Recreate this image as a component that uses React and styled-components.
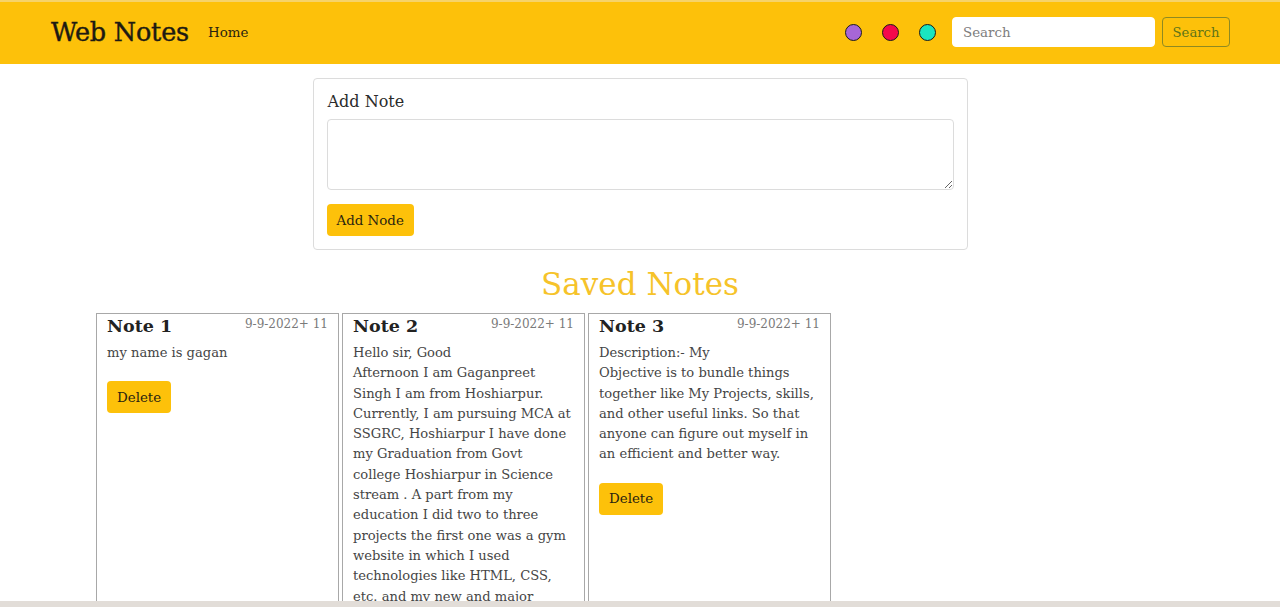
import React from "react";
import styled, { createGlobalStyle } from "styled-components";

const GlobalStyle = createGlobalStyle`
    *{
        box-sizing : border-box;
    }
    body{
        margin : 0;
        background : #fff;
        font-family : "DejaVu Serif", "Liberation Serif", serif;
        color : #212529;
    }
`

const Nav = styled.nav`
    height : 64px;
    background : #fdc10a;
    border-top : 2px solid #f6d36a;
    display : flex;
    align-items : center;
    padding : 0 50px 2px 51px;
`
const Brand = styled.a`
    font-size : 25.5px;
    color : #1d1a12;
    margin-right : 19px;
    letter-spacing : -0.2px;
    -webkit-text-stroke : 0.4px #1d1a12;
`
const NavLink = styled.a`
    font-size : 13.4px;
    color : #2a2410;
`
const Spacer = styled.div`
    flex : 1;
`
const Dot = styled.span`
    width : 17px;
    height : 17px;
    border-radius : 50%;
    border : 1.5px solid #1a1a1a;
    background : ${props=>props.color};
    margin-right : 20px;
    display : inline-block;
`
const SearchForm = styled.form`
    display : flex;
    align-items : center;
    margin-left : -4px;
`
const SearchInput = styled.input`
    width : 203px;
    height : 30px;
    border : 1px solid #fff;
    border-radius : 4px;
    padding : 0 10px;
    font-family : inherit;
    font-size : 13.4px;
    outline : none;
    &::placeholder{
        color : #7d7d7d;
    }
`
const SearchButton = styled.button`
    margin-left : 7px;
    height : 30px;
    width : 68px;
    background : transparent;
    border : 1px solid #8e8a22;
    border-radius : 4px;
    font-family : inherit;
    font-size : 13.2px;
    color : #5f7418;
`

const Main = styled.main`
    padding-top : 14px;
`
const AddCard = styled.div`
    width : 655px;
    margin : 0 auto;
    border : 1px solid #dcdcdc;
    border-radius : 4px;
    padding : 13px 13px 13px;
`
const AddTitle = styled.h5`
    margin : 0 0 7px 1px;
    font-size : 16px;
    font-weight : normal;
    line-height : 20px;
    color : #2b2b2b;
`
const TextArea = styled.textarea`
    display : block;
    width : 100%;
    height : 71px;
    border : 1px solid #dcdcdc;
    border-radius : 4px;
    font-family : inherit;
    margin-bottom : 14px;
`
const YellowButton = styled.button`
    height : 32px;
    padding : 0 10px;
    background : #fdc10a;
    border : none;
    border-radius : 4px;
    font-family : inherit;
    font-size : 13.4px;
    color : #2a2410;
`
const Heading = styled.h1`
    text-align : center;
    font-size : 31px;
    font-weight : normal;
    color : #f6c32a;
    margin : 13px 0 8px;
    line-height : 42px;
`
const NotesRow = styled.div`
    display : flex;
    gap : 3px;
    margin-left : 96px;
`
const NoteCard = styled.div`
    width : 243px;
    border : 1px solid #a8a8a8;
    padding : 0 10px 10px;
`
const NoteHead = styled.div`
    display : flex;
    justify-content : space-between;
    align-items : flex-start;
    height : 29px;
`
const NoteTitle = styled.h3`
    margin : 0;
    font-size : 17.5px;
    line-height : 24px;
    color : #222;
`
const NoteDate = styled.span`
    font-size : 12px;
    color : #7a7a7a;
    padding-top : 3px;
`
const NoteText = styled.p`
    margin : 0 0 18px;
    font-size : 13.1px;
    line-height : 20.3px;
    color : #454545;
    white-space : pre-line;
`
const BottomBar = styled.div`
    position : fixed;
    left : 0;
    right : 0;
    bottom : 0;
    height : 6px;
    background : #e2ddd8;
`

const notes = [
    { title : "Note 1", text : "my name is gagan" },
    { title : "Note 2", text : "Hello sir, Good\nAfternoon I am Gaganpreet Singh I am from Hoshiarpur. Currently, I am pursuing MCA at SSGRC, Hoshiarpur I have done my Graduation from Govt college Hoshiarpur in Science stream . A part from my education I did two to three projects the first one was a gym website in which I used technologies like HTML, CSS, etc. and my new and major project is this web notes app which is made using HTML, CSS and JavaScript." },
    { title : "Note 3", text : "Description:- My\nObjective is to bundle things together like My Projects, skills, and other useful links. So that anyone can figure out myself in an efficient and better way." },
]

const App = () => {
    return (
        <>
            <GlobalStyle />
            <Nav>
                <Brand>Web Notes</Brand>
                <NavLink>Home</NavLink>
                <Spacer />
                <Dot color="#a766d6" />
                <Dot color="#f5074b" />
                <Dot color="#1ae5c0" />
                <SearchForm onSubmit={e=>e.preventDefault()}>
                    <SearchInput placeholder="Search" />
                    <SearchButton>Search</SearchButton>
                </SearchForm>
            </Nav>
            <Main>
                <AddCard>
                    <AddTitle>Add Note</AddTitle>
                    <TextArea />
                    <YellowButton>Add Node</YellowButton>
                </AddCard>
                <Heading>Saved Notes</Heading>
                <NotesRow>
                    {notes.map(note=>(
                        <NoteCard key={note.title}>
                            <NoteHead>
                                <NoteTitle>{note.title}</NoteTitle>
                                <NoteDate>9-9-2022+ 11</NoteDate>
                            </NoteHead>
                            <NoteText>{note.text}</NoteText>
                            <YellowButton>Delete</YellowButton>
                        </NoteCard>
                    ))}
                </NotesRow>
            </Main>
            <BottomBar />
        </>
    )
}
export default App;
